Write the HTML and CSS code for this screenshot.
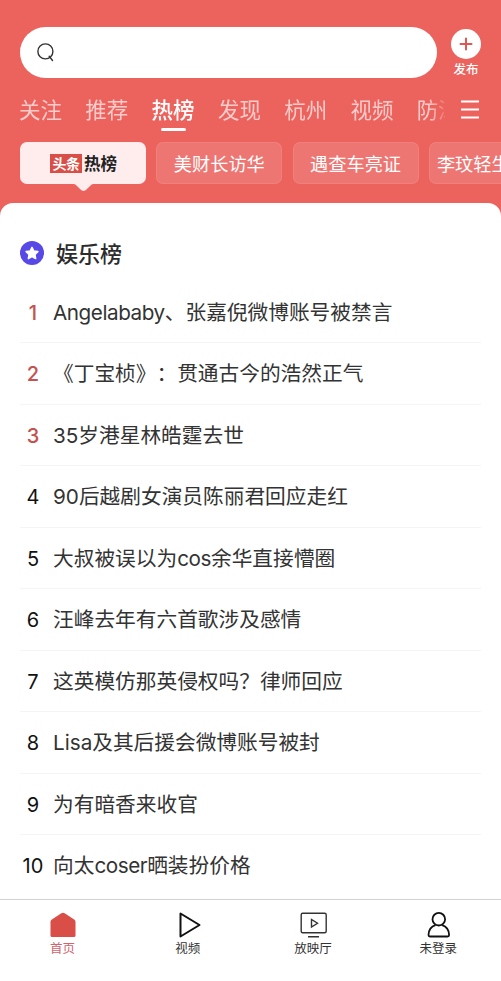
FILE: index.html
```html
<!DOCTYPE html>
<html lang="zh-CN">
<head>
<meta charset="utf-8">
<title>热榜</title>
<link rel="stylesheet" href="styles.css">
</head>
<body>
<div class="app">
  <header class="header">
    <div class="top">
      <div class="search">
        <svg width="18" height="19" viewBox="0 0 18 19" fill="none" stroke="#333" stroke-width="1.4" stroke-linecap="round"><circle cx="8.400" cy="8.400" r="7.500"/><path d="M12.200 13.200l3.300 4.300"/></svg>
      </div>
      <div class="publish">
        <svg width="30" height="30" viewBox="0 0 30 30"><circle cx="15" cy="15" r="15" fill="#fff"/><path d="M9.500 15h11M15 9.500v11" stroke="#df5752" stroke-width="2" stroke-linecap="round"/></svg>
        <span>发布</span>
      </div>
    </div>
    <div class="nav">
      <nav class="tabs">
        <span>关注</span><span>推荐</span><span class="active">热榜</span><span>发现</span><span>杭州</span><span>视频</span><span>防溺</span>
      </nav>
      <svg class="menu" width="18" height="20" viewBox="0 0 18 20" stroke="#fff" stroke-width="1.9"><path d="M0 1.500h18M0 9.500h18M0 17.500h18"/></svg>
    </div>
    <div class="chips">
      <div class="chip selected"><b class="brand">头条</b><b class="hot">热榜</b></div>
      <div class="chip">美财长访华</div>
      <div class="chip">遇查车亮证</div>
      <div class="chip last">李玟轻生</div>
    </div>
  </header>
  <main class="panel">
    <h1 class="title">
      <svg width="24" height="24" viewBox="0 0 24 24"><circle cx="12" cy="12" r="12" fill="#5848e5"/><path d="M12 6.300l1.850 3.700 4.050.6-2.950 2.900.7 4.100-3.650-1.950-3.650 1.950.7-4.100-2.950-2.900 4.050-.6z" fill="#fff" stroke="#fff" stroke-width="1.500" stroke-linejoin="round"/></svg>
      <span>娱乐榜</span>
    </h1>
    <ol class="list">
      <li class="top3"><i>1</i><span><span class="name">Angelababy</span>、张嘉倪微博账号被禁言</span></li>
      <li class="top3"><i>2</i><span>《丁宝桢》：贯通古今的浩然正气</span></li>
      <li class="top3"><i>3</i><span>35岁港星林皓霆去世</span></li>
      <li><i>4</i><span>90后越剧女演员陈丽君回应走红</span></li>
      <li><i>5</i><span>大叔被误以为<span class="name">cos</span>余华直接懵圈</span></li>
      <li><i>6</i><span>汪峰去年有六首歌涉及感情</span></li>
      <li><i>7</i><span>这英模仿那英侵权吗？律师回应</span></li>
      <li><i>8</i><span>Lisa及其后援会微博账号被封</span></li>
      <li><i>9</i><span>为有暗香来收官</span></li>
      <li><i>10</i><span>向太<span class="name">coser</span>晒装扮价格</span></li>
    </ol>
  </main>
  <footer class="footer">
    <div class="item current">
      <svg width="28" height="28" viewBox="0 0 28 28"><path d="M2.500 8.800L12.300 2.200q1.700-1.100 3.400 0L25.500 8.800q1 .8 1 2V24.500q0 1.500-1.500 1.500H3q-1.500 0-1.500-1.500V10.800q0-1.200 1-2z" fill="#d94f47"/></svg>
      <span>首页</span>
    </div>
    <div class="item">
      <svg width="28" height="28" viewBox="0 0 28 28" fill="none" stroke="#111" stroke-width="2" stroke-linejoin="round"><path d="M6.500 2.500v23L25.500 14z"/></svg>
      <span>视频</span>
    </div>
    <div class="item">
      <svg width="28" height="28" viewBox="0 0 28 28" fill="none" stroke="#333" stroke-width="1.400"><rect x="2.200" y="2.200" width="25" height="19.500" rx="1.500"/><path d="M12.500 8.500v7.500l6-3.750zM9 25.700h11"/></svg>
      <span>放映厅</span>
    </div>
    <div class="item">
      <svg width="28" height="28" viewBox="0 0 28 28" fill="none" stroke="#111" stroke-width="1.800" stroke-linejoin="round"><circle cx="14.800" cy="8.200" r="6.300"/><path d="M11.500 14.200C7.200 15.500 4.700 19 4.500 24q0 1.500 1.500 1.500h17.600q1.500 0 1.500-1.500C24.900 19 22.400 15.500 18.100 14.200"/></svg>
      <span>未登录</span>
    </div>
  </footer>
</div>
</body>
</html>
```
FILE: styles.css
```css
* { box-sizing: border-box; }
body {
  margin: 0;
  font-family: "Noto Sans CJK SC", sans-serif;
  text-spacing-trim: space-all;
  background: #fff;
}
svg { display: block; flex: none; }
.app {
  width: 501px;
  height: 981px;
  overflow: hidden;
  display: flex;
  flex-direction: column;
  background: #ec625d;
}
.header { height: 203px; flex: none; padding-top: 27px; }
.top { display: flex; padding-left: 20px; height: 51px; }
.search {
  width: 417px;
  height: 51px;
  border-radius: 26px;
  background: #fff;
  padding: 16px 17px;
}
.publish {
  width: 40px;
  margin-left: 9px;
  padding-top: 2px;
  display: flex;
  flex-direction: column;
  align-items: center;
  color: #fff;
  font-size: 12.500px;
  line-height: 20px;
  font-weight: 500;
  white-space: nowrap;
}
.nav { display: flex; height: 54px; padding: 15px 0 0 19px; }
.tabs {
  width: 426px;
  overflow: hidden;
  display: flex;
  gap: 22.300px;
  font-size: 21.500px;
  line-height: 32px;
  color: rgba(255, 255, 255, .68);
  mask-image: linear-gradient(to right, #000 410px, transparent 430px);
}
.tabs span {
  flex: none;
  width: 44px;
  white-space: nowrap;
  display: flex;
  flex-direction: column;
  align-items: flex-start;
}
.tabs .active { color: #fff; font-weight: 500; }
.tabs .active::after {
  content: "";
  width: 25px;
  height: 3px;
  border-radius: 2px;
  background: #fff;
  margin: 3px 0 0 9.500px;
}
.menu { margin: 7px 0 0 16px; }
.chips { display: flex; gap: 10.300px; padding: 10px 0 0 20px; overflow: hidden; height: 60px; }
.chip {
  flex: none;
  width: 126px;
  height: 42px;
  border: 1px solid rgba(255, 255, 255, .08);
  border-radius: 7px;
  background: rgba(255, 255, 255, .13);
  color: #fff;
  font-size: 18.200px;
  line-height: 40px;
  text-align: center;
  white-space: nowrap;
}
.chip.last { text-align: left; padding-left: 7px; }
.chip.selected {
  position: relative;
  display: flex;
  align-items: center;
  justify-content: center;
  gap: 2px;
  padding-left: 1px;
  border: 0;
  background: #ffeced;
}
.chip.selected::after {
  content: "";
  position: absolute;
  left: 50px;
  top: 41px;
  width: 27px;
  height: 8px;
  background: #ffeced;
  clip-path: polygon(0 0, 20% 20%, 42% 90%, 50% 100%, 58% 90%, 80% 20%, 100% 0);
}
.brand {
  width: 32px;
  height: 19px;
  background: #d94f47;
  font-size: 14px;
  line-height: 19px;
  letter-spacing: -.5px;
}
.hot { color: #222; font-size: 16.500px; line-height: 19px; }
.panel {
  height: 696px;
  flex: none;
  border-radius: 13px 13px 0 0;
  background: #fff;
  padding: 0 20px;
}
.title {
  display: flex;
  align-items: center;
  gap: 12px;
  height: 78.500px;
  margin: 0;
  padding-top: 22px;
  font-size: 22px;
  line-height: 30px;
  font-weight: 500;
  color: #2c2c2c;
}
.title span { margin-top: -2px; }
.list { margin: 0; padding: 0; list-style: none; }
.list li {
  height: 61.500px;
  display: flex;
  align-items: center;
  padding-top: 2px;
  border-bottom: 1px solid #f5f5f5;
  font-family: Inter, "Noto Sans CJK SC", sans-serif;
  font-size: 20.700px;
  line-height: 30px;
  color: #333;
  white-space: nowrap;
}
.list li:last-child { border: 0; padding-top: 0; }
.list i {
  width: 26px;
  margin-right: 7px;
  text-align: center;
  font-style: normal;
  font-size: 20px;
  color: #111;
}
.list .top3 i { color: #c4524f; font-weight: 500; }
.name { letter-spacing: -.45px; }
.footer {
  flex: 1;
  display: flex;
  border-top: 1px solid #d2d2d2;
  background: #fff;
}
.item {
  flex: 1;
  display: flex;
  flex-direction: column;
  align-items: center;
  padding-top: 11px;
  font-size: 12.500px;
  line-height: 18px;
  color: #333;
}
.item.current { color: #cf6470; }
```
